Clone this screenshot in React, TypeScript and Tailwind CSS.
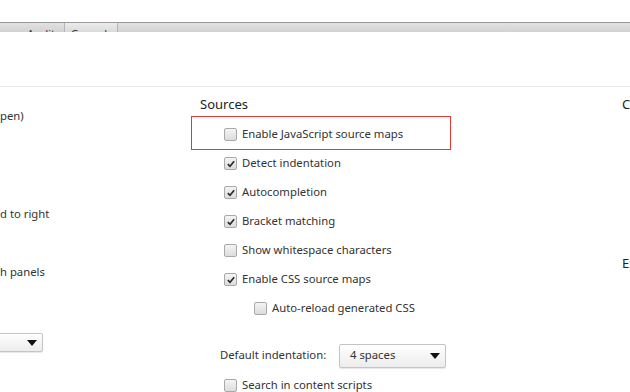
import React from "react";

function Box({ checked }: { checked?: boolean }) {
  return (
    <span className="relative inline-flex h-[13px] w-[13px] shrink-0 items-center justify-center rounded-[2px] border border-[#a9a9a9] bg-gradient-to-b from-[#f4f4f4] to-[#dcdcdc]">
      {checked && (
        <svg viewBox="0 0 12 12" className="h-[10px] w-[10px]">
          <path d="M2.2 6.2 L4.8 8.8 L9.8 2.6" fill="none" stroke="#2a2a2a" strokeWidth="2" />
        </svg>
      )}
    </span>
  );
}

function Row({ label, checked, indent }: { label: string; checked?: boolean; indent?: boolean }) {
  return (
    <div className={`flex h-[29px] items-center gap-[5px] ${indent ? "pl-[54px]" : "pl-[24px]"}`}>
      <Box checked={checked} />
      <span>{label}</span>
    </div>
  );
}

function Caret() {
  return (
    <svg viewBox="0 0 10 6" className="h-[6px] w-[10px]">
      <path d="M0 0 H10 L5 6 Z" fill="#111" />
    </svg>
  );
}

export default function App() {
  return (
    <div className="h-[392px] w-[630px] overflow-hidden bg-white text-[11.3px] text-[#333] [font-family:'Noto_Sans',sans-serif]">
      <div className="h-[22px]" />
      <div className="flex h-[10px] overflow-hidden border-t border-[#9a9a9a] bg-gradient-to-b from-[#e2e2e2] to-[#d2d2d2] text-[#333]">
        <div className="w-[64px] pl-[27px] pt-[4px] leading-[14px]">Audits</div>
        <div className="w-[54px] border-x border-[#b5b5b5] bg-gradient-to-b from-[#ececec] to-[#dadada] pl-[6px] pt-[4px] leading-[14px]">Console</div>
      </div>
      <div className="h-[55px] border-b border-[#ebebeb]" />
      <div className="flex">
        <div className="w-[191px] shrink-0">
          <div className="mt-[21px] h-[16px] leading-[16px]">pen)</div>
          <div className="mt-[82px] h-[16px] leading-[16px]">d to right</div>
          <div className="mt-[42px] h-[16px] leading-[16px]">h panels</div>
          <div className="-ml-[60px] mt-[53px] flex h-[19px] w-[103px] items-center justify-end rounded-[2px] border border-[#c4c4c4] bg-gradient-to-b from-white to-[#ececec] pr-[5px] shadow-[0_1px_1px_rgba(0,0,0,0.1)]">
            <Caret />
          </div>
        </div>
        <div className="relative w-[431px] shrink-0 pl-[9px]">
          <div className="mt-[8px] h-[18px] text-[13px] leading-[18px] text-[#222]">Sources</div>
          <div className="mt-[7px]">
            <Row label="Enable JavaScript source maps" />
            <Row label="Detect indentation" checked />
            <Row label="Autocompletion" checked />
            <Row label="Bracket matching" checked />
            <Row label="Show whitespace characters" />
            <Row label="Enable CSS source maps" checked />
            <Row label="Auto-reload generated CSS" indent />
          </div>
          <div className="mt-[18px] flex h-[29px] items-center pl-[20px]">
            <span className="w-[119px]">Default indentation:</span>
            <div className="flex h-[24px] w-[107px] items-center justify-between rounded-[2px] border border-[#c4c4c4] bg-gradient-to-b from-white to-[#ececec] pl-[10px] pr-[5px] shadow-[0_1px_1px_rgba(0,0,0,0.1)]">
              <span>4 spaces</span>
              <Caret />
            </div>
          </div>
          <div className="mt-[1px]">
            <Row label="Search in content scripts" />
          </div>
          <div className="absolute left-0 top-[29px] h-[34px] w-[260px] border border-[#e53935]" />
        </div>
        <div className="flex-1">
          <div className="mt-[8px] h-[18px] text-[13px] leading-[18px] text-[#222]">Console</div>
          <div className="mt-[141px] h-[18px] text-[13px] leading-[18px] text-[#222]">Extensions</div>
        </div>
      </div>
    </div>
  );
}
